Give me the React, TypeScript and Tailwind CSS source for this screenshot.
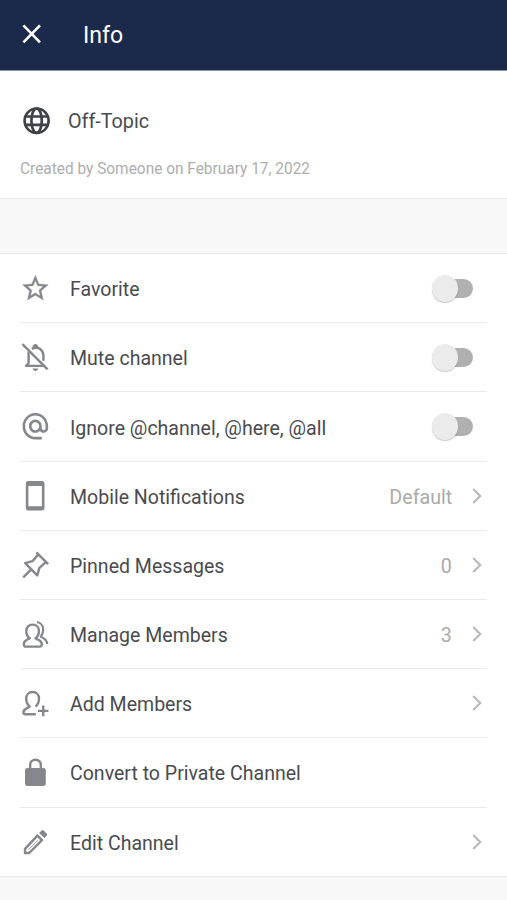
import type { ReactNode } from "react";

type Row = {
  label: string;
  icon: ReactNode;
  toggle?: boolean;
  value?: string;
  arrow?: boolean;
};

const line = {
  fill: "none",
  stroke: "currentColor",
  strokeWidth: 2.4,
  strokeLinejoin: "round" as const,
};

const ROWS: Row[] = [
  {
    label: "Favorite",
    toggle: true,
    icon: (
      <path
        fill="currentColor"
        stroke="currentColor"
        strokeWidth={0.25}
        transform="translate(0 .6) scale(1.28 1.31)"
        d="M12,15.39L8.24,17.66L9.23,13.38L5.91,10.5L10.29,10.13L12,6.09L13.71,10.13L18.09,10.5L14.77,13.38L15.76,17.66M22,9.24L14.81,8.63L12,2L9.19,8.63L2,9.24L7.45,13.97L5.82,21L12,17.27L18.18,21L16.54,13.97L22,9.24Z"
      />
    ),
  },
  {
    label: "Mute channel",
    toggle: true,
    icon: (
      <>
        <path {...line} d="M2.4 3.2L27.6 28.4" />
        <path {...line} d="M8.6 10.5V22.3L6 24.9H23.5" />
        <path {...line} d="M11.8 7.8C18.6 4.6 23.4 9 23.4 14.5V19.8" />
        <path fill="currentColor" d="M12.4 6.8C12.4 1.8 18.4 1.8 18.4 6.8ZM12.6 27.6H18.2C18 30.8 12.8 30.8 12.6 27.6Z" />
      </>
    ),
  },
  {
    label: "Ignore @channel, @here, @all",
    toggle: true,
    icon: (
      <path
        fill="currentColor"
        transform="translate(0 .3) scale(1.28 1.33)"
        d="M12 1.95c-5.52 0-10 4.48-10 10s4.48 10 10 10h5v-2h-5c-4.34 0-8-3.66-8-8s3.66-8 8-8 8 3.66 8 8v1.43c0 .79-.71 1.57-1.5 1.57s-1.5-.78-1.5-1.57v-1.43c0-2.76-2.24-5-5-5s-5 2.24-5 5 2.24 5 5 5c1.38 0 2.64-.56 3.54-1.47.65.89 1.77 1.47 2.96 1.47 1.97 0 3.5-1.6 3.5-3.57v-1.43c0-5.52-4.48-10-10-10zm0 13c-1.66 0-3-1.34-3-3s1.34-3 3-3 3 1.34 3 3-1.34 3-3 3z"
      />
    ),
  },
  {
    label: "Mobile Notifications",
    value: "Default",
    arrow: true,
    icon: (
      <path
        fill="currentColor"
        fillRule="evenodd"
        d="M8.3 1H22a2.5 2.5 0 0 1 2.5 2.5V28a2.5 2.5 0 0 1-2.5 2.5H8.3A2.5 2.5 0 0 1 5.8 28V3.5A2.5 2.5 0 0 1 8.3 1ZM8.4 6V26.2H21.9V6Z"
      />
    ),
  },
  {
    label: "Pinned Messages",
    value: "0",
    arrow: true,
    icon: (
      <>
        <path {...line} d="M16.4 3.4L28.2 15.2" />
        <path {...line} d="M18.2 5.6L12.4 12.2L5.2 14.2L17.2 26.4L19.4 18.9L25.8 13.2" />
        <path {...line} d="M11.2 20.3L3.2 28.3" />
      </>
    ),
  },
  {
    label: "Manage Members",
    value: "3",
    arrow: true,
    icon: (
      <>
        <path {...line} d="M9.8 20.2C7.4 18.6 6.3 15.8 6.3 12.9C6.3 9 9 6.6 12.6 6.6S18.9 9 18.9 12.9C18.9 15.8 17.8 18.6 15.4 20.2C17.8 21.8 21.8 22 21.8 26.2C21.8 28 21 28.6 19.5 28.6H6.1C4.5 28.6 3.8 28 3.8 26.2C3.8 22 7.4 21.8 9.8 20.2Z" />
        <path {...line} strokeWidth={2.2} d="M17 4C20.8 4.6 23.2 7.8 23.2 11.8C23.2 14.4 22.4 16.6 20.8 18.6C23.8 20 27 21.4 27.2 26" />
      </>
    ),
  },
  {
    label: "Add Members",
    arrow: true,
    icon: (
      <>
        <path {...line} d="M15.8 27.3H5.3C4 27.3 3.4 26.7 3.4 25.4C3.4 21.8 7.4 21.4 9.8 19.6C7.4 17.8 6.2 14.8 6.2 11.6C6.2 7.6 9 5 12.6 5S19 7.6 19 11.6C19 14.8 17.8 17.8 15.4 19.6" />
        <path {...line} d="M23.2 18.6V29.2M18 23.9H28.4" />
      </>
    ),
  },
  {
    label: "Convert to Private Channel",
    icon: (
      <>
        <rect x="5" y="11.9" width="20.8" height="18.2" rx="2.4" fill="currentColor" />
        <path {...line} d="M10.2 12.4V8.8C10.2 2 20.8 2 20.8 8.8V12.4" />
      </>
    ),
  },
  {
    label: "Edit Channel",
    arrow: true,
    icon: (
      <>
        <path {...line} d="M5 27V22.9L17.4 9.6L22 14.2L9.2 27Z" />
        <path {...line} strokeWidth={0.9} d="M8.4 23.8L18 14.2" />
        <path fill="currentColor" d="M19.2 6.9L21.8 4.3Q22.6 3.6 23.4 4.3L26.8 7.8Q27.4 8.6 26.8 9.4L24.4 12Z" />
      </>
    ),
  },
];

function Toggle() {
  return (
    <div className="mr-[14px] flex h-[19px] w-[38px] items-center rounded-full bg-[#b0b0b0]">
      <div className="-ml-[3px] h-[27px] w-[26px] shrink-0 rounded-full bg-[#ebebeb] shadow-[0_1px_1px_rgba(0,0,0,0.22)]" />
    </div>
  );
}

function Chevron() {
  return (
    <svg className="ml-[20px] mr-[5px] h-4 w-[10px]" viewBox="0 0 10 16" fill="none" stroke="#b9b9b9" strokeWidth="2.2">
      <path d="M1.2 1L8.2 8L1.2 15" />
    </svg>
  );
}

function App() {
  return (
    <div className="flex h-[900px] w-[507px] flex-col overflow-hidden bg-[#f8f8f8] font-['Roboto',sans-serif] text-[#494b50]">
      <header className="flex h-[71px] shrink-0 items-center border-b border-[#8d94a5] bg-[#1b294b] pl-[22px] text-white">
        <svg className="mt-[-3px] h-5 w-5" viewBox="0 0 20 20" fill="none" stroke="currentColor" strokeWidth="2.6">
          <path d="M1.4 1.4L18 18.4M18 1.4L1.4 18.4" />
        </svg>
        <h1 className="ml-[41px] origin-left scale-x-[0.98] text-[23.5px] leading-7">Info</h1>
      </header>

      <section className="h-[128px] shrink-0 border-b border-[#ebebeb] bg-white pl-5 pt-[34px]">
        <div className="flex h-8 items-center">
          <svg className="ml-[3px] h-7 w-7 text-[#3f4349]" viewBox="0 0 28 28" fill="none" stroke="currentColor" strokeWidth="2.7">
            <ellipse cx="13.6" cy="13.7" rx="12" ry="12.2" />
            <ellipse cx="13.6" cy="13.7" rx="5.2" ry="12.2" />
            <path d="M2.4 9.5H24.8M2.4 17.9H24.8" />
          </svg>
          <h2 className="ml-[17px] origin-left scale-x-[0.94] text-[21px] leading-8">Off-Topic</h2>
        </div>
        <p className="mt-[20px] w-max origin-left scale-x-[0.935] text-[16.5px] leading-6 text-[#adadad]">
          Created by Someone on February 17, 2022
        </p>
      </section>

      <ul className="mt-[54px] shrink-0 border-y border-[#e8e8e8] bg-white px-5">
        {ROWS.map((row) => (
          <li key={row.label} className="flex h-[69.2px] items-center border-b border-[#ebebeb] last:h-[68.4px] last:border-b-0">
            <svg className="h-8 w-[30px] shrink-0 text-[#85878c]" viewBox="0 0 30 32">
              {row.icon}
            </svg>
            <span className="ml-[20.4px] origin-left scale-x-[0.93] whitespace-nowrap pt-[3.6px] text-[21px]">
              {row.label}
            </span>
            <div className="ml-auto flex items-center">
              {row.value && (
                <span className="origin-right scale-x-[0.935] pt-[3.6px] text-[21px] text-[#aaaaaa]">{row.value}</span>
              )}
              {row.toggle && <Toggle />}
              {row.arrow && <Chevron />}
            </div>
          </li>
        ))}
      </ul>
    </div>
  );
}

export default App;
